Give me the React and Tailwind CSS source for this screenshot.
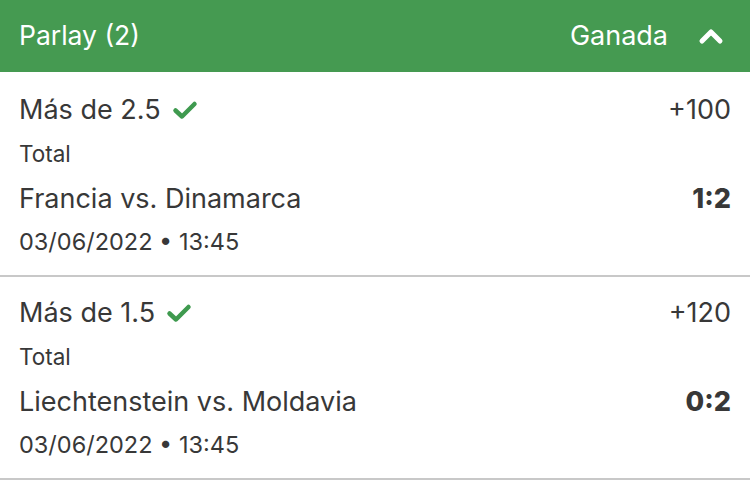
import React from "react";

const bets = [
  { market: "Más de 2.5", odds: "+100", type: "Total", match: "Francia vs. Dinamarca", score: "1:2", date: "03/06/2022 • 13:45" },
  { market: "Más de 1.5", odds: "+120", type: "Total", match: "Liechtenstein vs. Moldavia", score: "0:2", date: "03/06/2022 • 13:45" },
];

function Check() {
  return (
    <svg width="26" height="20" viewBox="0 0 26 20" className="ml-[11px]">
      <path d="M3.5 10.5 L10 16.5 L22.5 4" fill="none" stroke="#3f9a4f" strokeWidth="4.5" strokeLinecap="round" strokeLinejoin="round" />
    </svg>
  );
}

export default function App() {
  return (
    <div className="w-[750px] h-[480px] bg-white text-[#383838] overflow-hidden" style={{ fontFamily: "Inter, 'Noto Sans', sans-serif" }}>
      {/* Header */}
      <div className="h-[72px] bg-[#459a51] flex items-center justify-between pl-[19px] pr-[26px] text-white">
        <span className="text-[26.5px]">Parlay (2)</span>
        <div className="flex items-center">
          <span className="text-[27px]">Ganada</span>
          <svg width="26" height="18" viewBox="0 0 26 18" className="ml-[30px]">
            <path d="M4 14 L13 5 L22 14" fill="none" stroke="#fff" strokeWidth="5" strokeLinecap="round" strokeLinejoin="round" />
          </svg>
        </div>
      </div>

      {bets.map((b, i) => (
        <div key={i} className={(i === 0 ? "pt-[16px] pb-[11px]" : "pt-[14px] pb-[11px]") + " px-[19px] border-b-2 border-[#c8c8c8]"}>
          <div className="h-[44px] flex items-center justify-between">
            <div className="flex items-center text-[27px]">
              {b.market}
              <Check />
            </div>
            <span className="text-[27px]">{b.odds}</span>
          </div>
          <div className="h-[44px] flex items-center text-[22.5px]">{b.type}</div>
          <div className="h-[44px] flex items-center justify-between pt-[2px]">
            <span className="text-[27px]">{b.match}</span>
            <span className="text-[27px] font-extrabold">{b.score}</span>
          </div>
          <div className="h-[44px] flex items-center text-[23.5px]">{b.date}</div>
        </div>
      ))}
    </div>
  );
}
